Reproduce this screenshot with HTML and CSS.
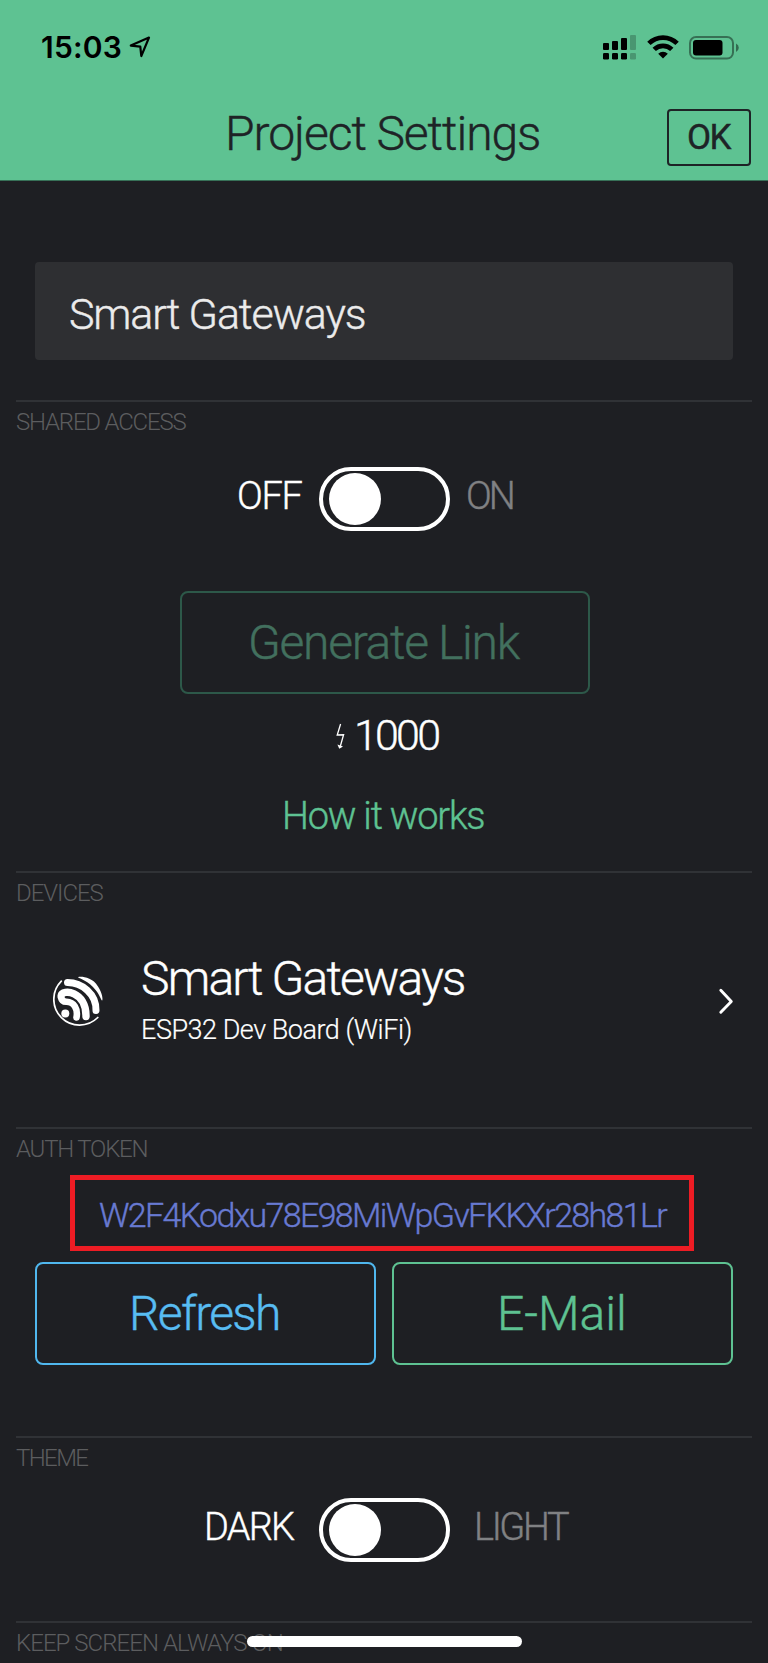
FILE: index.html
```
<!DOCTYPE html>
<html lang="en">
<head>
<meta charset="utf-8">
<title>Project Settings</title>
<link rel="stylesheet" href="styles.css">
</head>
<body>
<div class="screen">
  <header class="header">
    <div class="status">
      <span class="time">15:03</span>
      <svg class="location" width="22" height="22" viewBox="0 0 22 22"><path d="M1.8 9.6 20 1.6 12.3 20 11.3 10.6Z" fill="none" stroke="#000" stroke-width="2.2" stroke-linejoin="round"/></svg>
      <svg class="signal" width="33" height="25" viewBox="0 0 33 25"><g fill="#000"><rect x="0" y="8" width="6" height="7" rx="1"/><rect x="9" y="6" width="6" height="9" rx="1"/><rect x="18" y="3" width="6" height="12" rx="1"/><rect x="0" y="18" width="6" height="6.5" rx="1.2"/><rect x="9" y="18" width="6" height="6.5" rx="1.2"/><rect x="18" y="18" width="6" height="6.5" rx="1.2"/></g><g fill="#000" opacity=".22"><rect x="27" y="0" width="6" height="15" rx="1"/><rect x="27" y="18" width="6" height="6.5" rx="1.2"/></g></svg>
      <svg class="wifi" width="32" height="24" viewBox="0 0 32 24"><g fill="none" stroke="#000" stroke-width="4.8"><path d="M1.9 8.4a20 20 0 0 1 28.2 0"/><path d="M7.2 14.4a12.6 12.6 0 0 1 17.6 0"/></g><path d="M16 23.4 11.2 18.7a7 7 0 0 1 9.6 0Z" fill="#000"/></svg>
      <svg class="battery" width="50" height="24" viewBox="0 0 50 24"><rect x="1" y="1" width="43" height="21.6" rx="6" fill="none" stroke="#000" stroke-opacity=".42" stroke-width="2"/><rect x="4" y="4" width="29.5" height="15.6" rx="3" fill="#000"/><path d="M47 7.6q2.8 1.4 2.8 4.2T47 16Z" fill="#000" opacity=".45"/></svg>
    </div>
    <div class="titlebar">
      <h1 class="title">Project Settings</h1>
      <button class="ok">OK</button>
    </div>
  </header>

  <div class="name-area"><div class="name-field">Smart Gateways</div></div>

  <section class="section shared">
    <h2 class="label label-shared">SHARED ACCESS</h2>
    <div class="toggle-row">
      <span class="choice off">OFF</span><span class="toggle"><span class="knob"></span></span><span class="choice on">ON</span>
    </div>
    <button class="button generate">Generate Link</button>
    <div class="cost">
      <svg width="9" height="27" viewBox="0 0 9 27"><path d="M4.6 1 1.2 12l6.4-.2L4.4 23" fill="none" stroke="#fff" stroke-width="1.3"/><path d="M1.4 21.4 7 23.4 3.3 25.8Z" fill="#fff"/></svg>
      <span class="amount">1000</span>
    </div>
    <a class="how">How it works</a>
  </section>

  <section class="section devices">
    <h2 class="label label-devices">DEVICES</h2>
    <div class="device">
      <svg class="chip" width="50" height="50" viewBox="0 0 50 50"><g fill="none" stroke="#fff" stroke-linecap="round"><path d="M8.3 5.2A24.2 24.2 0 1 0 44.8 41.5" stroke-width="1.7"/><path d="M8.2 19.6C9 13 33.5 14.5 33 40.5" stroke-width="7.4"/><path d="M8 21.5Q9 26 13.5 25.8C21 26 25.2 33 23.5 41.5" stroke-width="6.6"/><path d="M14.5 6.5C29 6.5 43.5 18 43 34.5" stroke-width="7"/></g><path d="M25 1.2C27 .2 39 .4 45 10.4 49.5 17 50 24 49.2 24.4 48.3 25 47 19.5 43 14.5 35 4 27 3 25 1.2Z" fill="#fff"/><circle cx="12.3" cy="37.5" r="4" fill="#fff"/></svg>
      <div class="device-text">
        <div class="device-name">Smart Gateways</div>
        <div class="device-kind">ESP32 Dev Board (WiFi)</div>
      </div>
      <svg class="chevron" width="16" height="27" viewBox="0 0 16 27"><path d="M2.8 2.3 13.3 13.5 2.8 24.3" fill="none" stroke="#fff" stroke-width="2.9" stroke-linecap="round" stroke-linejoin="round"/></svg>
    </div>
  </section>

  <section class="section auth">
    <h2 class="label label-auth">AUTH TOKEN</h2>
    <div class="token">W2F4Kodxu78E98MiWpGvFKKXr28h81Lr</div>
    <div class="actions">
      <button class="button refresh">Refresh</button>
      <button class="button email">E-Mail</button>
    </div>
  </section>

  <section class="section theme">
    <h2 class="label label-theme">THEME</h2>
    <div class="toggle-row">
      <span class="choice dark">DARK</span><span class="toggle"><span class="knob"></span></span><span class="choice light">LIGHT</span>
    </div>
  </section>

  <section class="section awake">
    <h2 class="label label-awake">KEEP SCREEN ALWAYS ON</h2>
  </section>
  <div class="home-bar"></div>
</div>
</body>
</html>
```
FILE: styles.css
```
* { box-sizing: border-box; }
body { margin: 0; background: #1e1f23; }
.screen {
  position: relative;
  width: 768px;
  height: 1663px;
  overflow: hidden;
  background: #1e1f23;
  color: #fff;
  font-family: Roboto, "Liberation Sans", sans-serif;
  font-weight: 300;
  white-space: nowrap;
  -webkit-text-stroke: .4px currentColor;
}
h1, h2 { margin: 0; font-weight: 300; }
button { margin: 0; padding: 0; background: none; font: inherit; text-align: left; color: inherit; }
svg { display: block; flex: none; }

.header { height: 181px; background: #5ec292; color: #1e2326; border-bottom: 1px solid #377057; }
.status { display: flex; height: 109px; padding: 35px 29px 0 41px; align-items: flex-start; color: #000; }
.time { width: 88px; font: 600 30px/25px Inter, sans-serif; letter-spacing: .2px; -webkit-text-stroke: 0; }
.location { margin-top: 1px; margin-left: 4px; margin-right: 452px; }
.wifi { margin-left: 11px; }
.battery { margin-left: 10px; margin-top: 1px; }
.titlebar { display: flex; align-items: flex-start; padding-left: 225px; }
.title { width: 442px; font-size: 48px; line-height: 50px; letter-spacing: -1.05px; }
.ok { width: 84px; height: 57px; padding-left: 18px; border: 2px solid #1e2326; border-radius: 4px; font-size: 35px; font-weight: 400; line-height: 54px; letter-spacing: -1.6px; }

.name-area { height: 218px; padding: 81px 35px 0; }
.name-field { height: 98px; padding-left: 34px; border-radius: 4px; background: #2e2f32; color: #ebebeb; font-size: 43px; line-height: 104px; letter-spacing: -1.15px; }

.section { margin: 0 16px; border-top: 2px solid #303236; }
.label { height: 41px; color: #5c5d5f; font-size: 24px; line-height: 41px; -webkit-text-stroke: 0; }
.label-shared { letter-spacing: -1.2px; }
.label-devices { letter-spacing: -1.05px; }
.label-auth { letter-spacing: -1.2px; }
.label-theme { letter-spacing: -1.6px; }
.label-awake { letter-spacing: -.95px; }

.shared { height: 471px; margin-top: 1px; }
.toggle-row { display: flex; height: 64px; margin-top: 24px; }
.toggle { flex: none; width: 131px; height: 64px; padding: 2px 6px; border: 4px solid #fff; border-radius: 32px; }
.knob { display: block; width: 52px; height: 52px; border-radius: 50%; background: #fff; }
.choice { font-size: 38px; line-height: 59px; }
.off { width: 303px; padding-left: 221px; letter-spacing: -1.3px; }
.on { padding-left: 16px; letter-spacing: -3px; color: #808183; }
.dark { width: 303px; padding-left: 188px; letter-spacing: -1.8px; }
.light { padding-left: 24px; letter-spacing: -2.4px; color: #808183; }

.button { display: block; height: 103px; border: 2px solid; border-radius: 8px; font-size: 48px; line-height: 98px; }
.generate { width: 410px; margin: 60px 0 0 164px; padding-left: 66px; border-color: #2d5849; color: #42705e; letter-spacing: -1.3px; }
.cost { display: flex; height: 56px; margin-top: 29px; padding-left: 320px; }
.amount { margin-left: 9px; font-size: 43px; line-height: 25px; letter-spacing: -2.8px; }
.how { display: block; padding-left: 266px; font-size: 38px; line-height: 48px; letter-spacing: -1.2px; color: #5ec292; margin-top: 13px; }

.devices { height: 256px; }
.device { display: flex; padding: 39px 18px 0 37px; }
.chip { margin-top: 23px; }
.device-text { width: 615px; padding-left: 38px; }
.device-name { font-size: 48px; line-height: 52px; letter-spacing: -1.8px; }
.device-kind { padding-top: 1px; font-size: 27px; line-height: 48px; letter-spacing: -.48px; -webkit-text-stroke: .2px currentColor; }
.chevron { margin-top: 35px; }

.auth { height: 309px; }
.token { width: 624px; height: 76px; margin: 5px 0 11px 54px; padding-left: 24px; border: 5px solid #ee1c24; color: #687ad2; font-size: 34px; line-height: 71px; letter-spacing: -1.66px; }
.actions { display: flex; gap: 16px; margin: 0 19px; }
.refresh { width: 341px; padding-left: 92px; border-color: #50b7ee; color: #58bcf2; letter-spacing: -1.7px; }
.email { width: 341px; padding-left: 103px; border-color: #5ec292; color: #5ec292; }

.theme { height: 185px; }
.theme .toggle-row { margin-top: 19px; }
.home-bar { position: absolute; left: 247px; top: 1636px; width: 275px; height: 11px; border-radius: 6px; background: #fff; }
```
